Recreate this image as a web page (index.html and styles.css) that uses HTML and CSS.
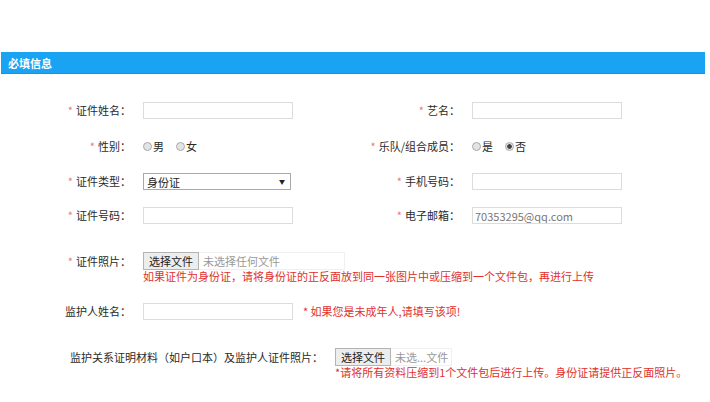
FILE: index.html
```html
<!DOCTYPE html>
<html lang="zh-CN">
<head>
  <meta charset="UTF-8" />
  <title>必填信息</title>
  <link rel="stylesheet" href="styles.css">
</head>
<body>
  <div class="page">
    <div class="bar">必填信息</div>

    <div class="form">
      <div class="grid">
        <label class="lbl"><i>*</i>证件姓名：</label>
        <div class="fld"><input type="text" class="txt" /></div>
        <label class="lbl"><i>*</i>艺名：</label>
        <div class="fld"><input type="text" class="txt" /></div>

        <label class="lbl"><i>*</i>性别：</label>
        <div class="fld radios">
          <span class="opt"><span class="radio"></span>男</span>
          <span class="opt"><span class="radio"></span>女</span>
        </div>
        <label class="lbl"><i>*</i>乐队/组合成员：</label>
        <div class="fld radios">
          <span class="opt"><span class="radio"></span>是</span>
          <span class="opt"><span class="radio checked"></span>否</span>
        </div>

        <label class="lbl"><i>*</i>证件类型：</label>
        <div class="fld"><div class="select"><span>身份证</span><span class="arrow">&#9660;</span></div></div>
        <label class="lbl"><i>*</i>手机号码：</label>
        <div class="fld"><input type="text" class="txt" /></div>

        <label class="lbl"><i>*</i>证件号码：</label>
        <div class="fld"><input type="text" class="txt" /></div>
        <label class="lbl"><i>*</i>电子邮箱：</label>
        <div class="fld"><input type="text" class="txt email" value="70353295@qq.com" /></div>
      </div>

      <div class="row photo">
        <label class="lbl"><i>*</i>证件照片：</label>
        <div class="stack">
          <div class="file wide"><span class="btn">选择文件</span><span class="none">未选择任何文件</span></div>
          <p class="note">如果证件为身份证，请将身份证的正反面放到同一张图片中或压缩到一个文件包，再进行上传</p>
        </div>
      </div>

      <div class="row guardian">
        <label class="lbl">监护人姓名：</label>
        <input type="text" class="txt" />
        <span class="note inline">* 如果您是未成年人,请填写该项!</span>
      </div>

      <div class="row proof">
        <label class="long">监护关系证明材料（如户口本）及监护人证件照片：</label>
        <div class="stack">
          <div class="file short"><span class="btn">选择文件</span><span class="none">未选...文件</span></div>
          <p class="note">*请将所有资料压缩到1个文件包后进行上传。身份证请提供正反面照片。</p>
        </div>
      </div>
    </div>
  </div>
</body>
</html>
```

FILE: styles.css
```css
* {
  box-sizing: border-box;
}

html, body {
  margin: 0;
  padding: 0;
  background: #fff;
  font-family: "Noto Sans CJK SC", "Liberation Sans", sans-serif;
  font-size: 11px;
  color: #2a2a2a;
}

.page {
  padding-top: 52px;
}

.bar {
  margin: 0 5px 0 1px;
  height: 22px;
  line-height: 22px;
  padding-left: 7px;
  background: #1aa3f3;
  border-bottom: 1px solid #1793dc;
  color: #fff;
  font-weight: bold;
  font-size: 11px;
}

.form {
  padding-top: 28px;
}

.grid {
  display: grid;
  grid-template-columns: 131px 176px 129px 1fr;
  grid-template-rows: 17px 20px 17px 17px;
  column-gap: 12px;
  row-gap: 17px;
}

.lbl {
  display: block;
  text-align: right;
  line-height: 17px;
  white-space: nowrap;
  align-self: center;
}

.lbl i {
  font-style: normal;
  color: #e77;
  margin-right: 3px;
}

.fld {
  display: flex;
  align-items: center;
}

.txt {
  width: 150px;
  height: 17px;
  border: 1px solid #dcdcdc;
  padding: 0 2px;
  font-family: inherit;
  font-size: 11px;
  color: #333;
  outline: none;
}

.txt.email {
  color: #777;
}

.radios {
  gap: 12px;
}

.opt {
  display: flex;
  align-items: center;
  line-height: 17px;
}

.radio {
  width: 9px;
  height: 9px;
  border-radius: 50%;
  border: 1px solid #aaa;
  background: #e4e4e4;
  margin-right: 1px;
}

.radio.checked {
  background: radial-gradient(circle, #444 0 2px, #e4e4e4 2.6px);
}

.select {
  width: 148px;
  height: 17px;
  border: 1px solid #a9a9a9;
  display: flex;
  justify-content: space-between;
  align-items: center;
  padding: 0 5px 0 3px;
  color: #222;
}

.select .arrow {
  font-size: 6px;
  color: #222;
}

.row {
  display: flex;
}

.photo {
  margin-top: 28px;
}

.photo .lbl,
.guardian .lbl {
  width: 131px;
  margin-right: 12px;
}

.photo .lbl {
  line-height: 18px;
  align-self: flex-start;
}

.stack {
  display: flex;
  flex-direction: column;
}

.file {
  display: flex;
  height: 18px;
  border: 1px solid #f0f0f0;
  border-left: none;
}

.file.wide {
  width: 202px;
}

.file.short {
  width: 117px;
}

.file .btn {
  width: 56px;
  height: 18px;
  margin-top: -1px;
  background: #ededed;
  border: 1px solid #b4b4b4;
  text-align: center;
  line-height: 16px;
  color: #222;
}

.file .none {
  padding-left: 4px;
  line-height: 16px;
  color: #999;
}

.note {
  margin: 0;
  line-height: 13px;
  color: #e0302c;
  white-space: nowrap;
}

.guardian {
  margin-top: 20px;
  align-items: center;
}

.note.inline {
  margin-left: 10px;
  line-height: 17px;
}

.proof {
  margin-top: 28px;
  padding-left: 70px;
}

.long {
  line-height: 18px;
  margin-right: 12px;
  white-space: nowrap;
}
```
